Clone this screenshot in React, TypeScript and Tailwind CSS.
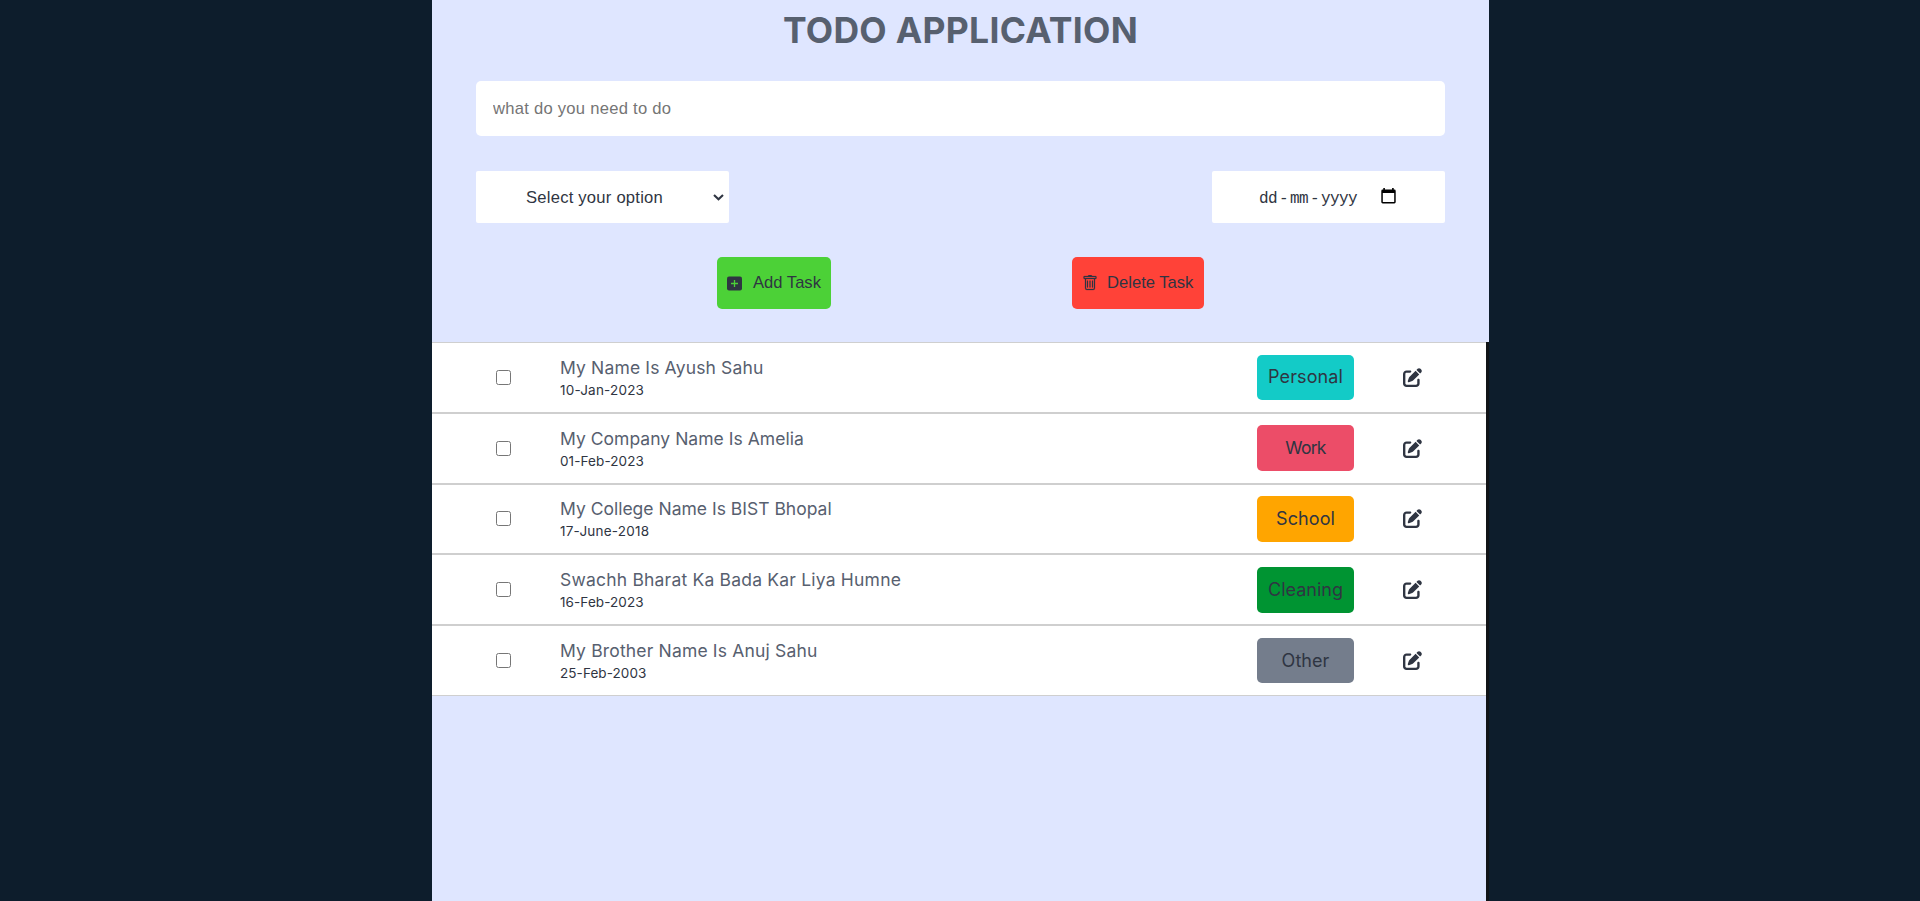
import { BsTrash } from "react-icons/bs";
import { FaPenToSquare } from "react-icons/fa6";

interface Task {
  name: string;
  nameSpacing: string;
  date: string;
  dateSpacing: string;
  tag: string;
  tagStyle: string;
}

const tasks: Task[] = [
  { name: "My Name Is Ayush Sahu", nameSpacing: "tracking-[0.15px]", date: "10-Jan-2023", dateSpacing: "tracking-[0.2px]", tag: "Personal", tagStyle: "bg-[#13cbc7] text-[18px] tracking-[0.1px]" },
  { name: "My Company Name Is Amelia", nameSpacing: "tracking-[0.03px]", date: "01-Feb-2023", dateSpacing: "tracking-[0.1px]", tag: "Work", tagStyle: "bg-[#ec4d68] text-[17.5px] tracking-[-0.7px]" },
  { name: "My College Name Is BIST Bhopal", nameSpacing: "tracking-[0px]", date: "17-June-2018", dateSpacing: "tracking-[0.222px]", tag: "School", tagStyle: "bg-[#ffa500] text-[18px] tracking-[0.1px]" },
  { name: "Swachh Bharat Ka Bada Kar Liya Humne", nameSpacing: "tracking-[0.2px]", date: "16-Feb-2023", dateSpacing: "tracking-[0.092px]", tag: "Cleaning", tagStyle: "bg-[#009432] text-[18px] tracking-[0.012px]" },
  { name: "My Brother Name Is Anuj Sahu", nameSpacing: "tracking-[0.17px]", date: "25-Feb-2003", dateSpacing: "tracking-[0.08px]", tag: "Other", tagStyle: "bg-[#747d8c] text-[18px] tracking-[0.052px]" },
];

function TaskRow({ task }: { task: Task }) {
  return (
    <li className="flex h-[70.8px] items-center border-y border-[#cfcfcf] bg-white pl-16">
      <input
        type="checkbox"
        className="m-0 size-[15px] shrink-0 appearance-none rounded-[2.5px] border border-[#767676] bg-white"
      />
      <div className="ml-[49px] flex flex-1 flex-col pt-px">
        <span className={`text-[17.5px] leading-[22px] text-[#57606f] ${task.nameSpacing}`}>{task.name}</span>
        <span className={`mt-0.5 text-[13.5px] leading-[18px] text-[#2f3542] ${task.dateSpacing}`}>{task.date}</span>
      </div>
      <span
        className={`flex h-[45.6px] w-[97px] items-center justify-center rounded-[5px] pb-px text-[#2f3542] ${task.tagStyle}`}
      >
        {task.tag}
      </span>
      <button className="ml-[49px] mr-16 text-[19px] text-[#2f3542]" aria-label="Edit">
        <FaPenToSquare />
      </button>
    </li>
  );
}

export default function App() {
  return (
    <div className="h-[901px] overflow-hidden bg-[#0d1d2c] pl-[432px] font-[Inter,sans-serif]">
      <div className="flex h-full w-[1057px] flex-col bg-[#111417]">
        <header className="flex h-[342px] shrink-0 flex-col bg-[#dfe6ff] px-11 text-[#2f3542]">
          <h1 className="mt-2 text-center text-[35.5px] leading-[45px] font-bold tracking-[0.28px] text-[#57606f]">
            TODO APPLICATION
          </h1>
          <input
            type="text"
            placeholder="what do you need to do"
            className="mt-7 h-[55px] shrink-0 rounded-[5px] bg-white px-[17px] font-['Liberation_Sans',sans-serif] text-[16.6px] tracking-[0.26px] placeholder:text-[#757575]"
          />
          <div className="mt-[35px] flex h-[52px] shrink-0 justify-between">
            <button className="flex w-[253px] items-center justify-between rounded-[2px] bg-white pr-[5px] pl-[50px] font-['Liberation_Sans',sans-serif] text-[16.6px] tracking-[0.23px]">
              <span className="pt-0.5">Select your option</span>
              <svg width="11" height="7" viewBox="0 0 11 7" fill="none" stroke="currentColor" strokeWidth="2.1">
                <path d="M1 1 5.5 5.3 10 1" />
              </svg>
            </button>
            <button className="flex w-[233px] items-center rounded-[2px] bg-white pl-[47px] font-['Liberation_Mono',monospace] text-[16px]">
              <span className="flex gap-0.5 pt-1 tracking-[-0.6px]">
                <span>dd</span>
                <span>-</span>
                <span>mm</span>
                <span>-</span>
                <span>yyyy</span>
              </span>
              <svg className="mb-[3px] ml-6" width="15" height="16" viewBox="0 0 15 16">
                <path
                  fill="#000"
                  fillRule="evenodd"
                  d="M2.3 0h1.6v1.5h7.2V0h1.6v1.5H13.3A1.4 1.4 0 0 1 14.7 2.9V14a1.4 1.4 0 0 1-1.4 1.4H1.7A1.4 1.4 0 0 1 .3 14V2.9A1.4 1.4 0 0 1 1.7 1.5h.6zM1.8 5v8.9h11.4V5z"
                />
              </svg>
            </button>
          </div>
          <div className="mt-[34px] flex h-[52px] shrink-0 pl-[241px] font-['Liberation_Sans',sans-serif] text-[16.6px]">
            <button className="flex w-[114px] items-center rounded-[5px] bg-[#4cd137] pl-2.5 whitespace-nowrap">
              <svg className="mr-[11px]" width="15" height="15" viewBox="0 0 15 15">
                <rect y="0.5" width="15" height="14" rx="2" fill="#2f3542" />
                <path d="M7.5 4v7M4 7.5h7" stroke="#4cd137" strokeWidth="1.3" />
              </svg>
              Add Task
            </button>
            <button className="ml-[241px] flex w-[132px] items-center rounded-[5px] bg-[#ff4238] pl-2.5 whitespace-nowrap">
              <BsTrash className="mr-[9px] size-4" stroke="currentColor" strokeWidth={0.25} />
              Delete Task
            </button>
          </div>
        </header>
        <main className="w-[1054px] flex-1 bg-[#dfe6ff]">
          <ul>
            {tasks.map((task) => (
              <TaskRow key={task.name} task={task} />
            ))}
          </ul>
        </main>
      </div>
    </div>
  );
}
